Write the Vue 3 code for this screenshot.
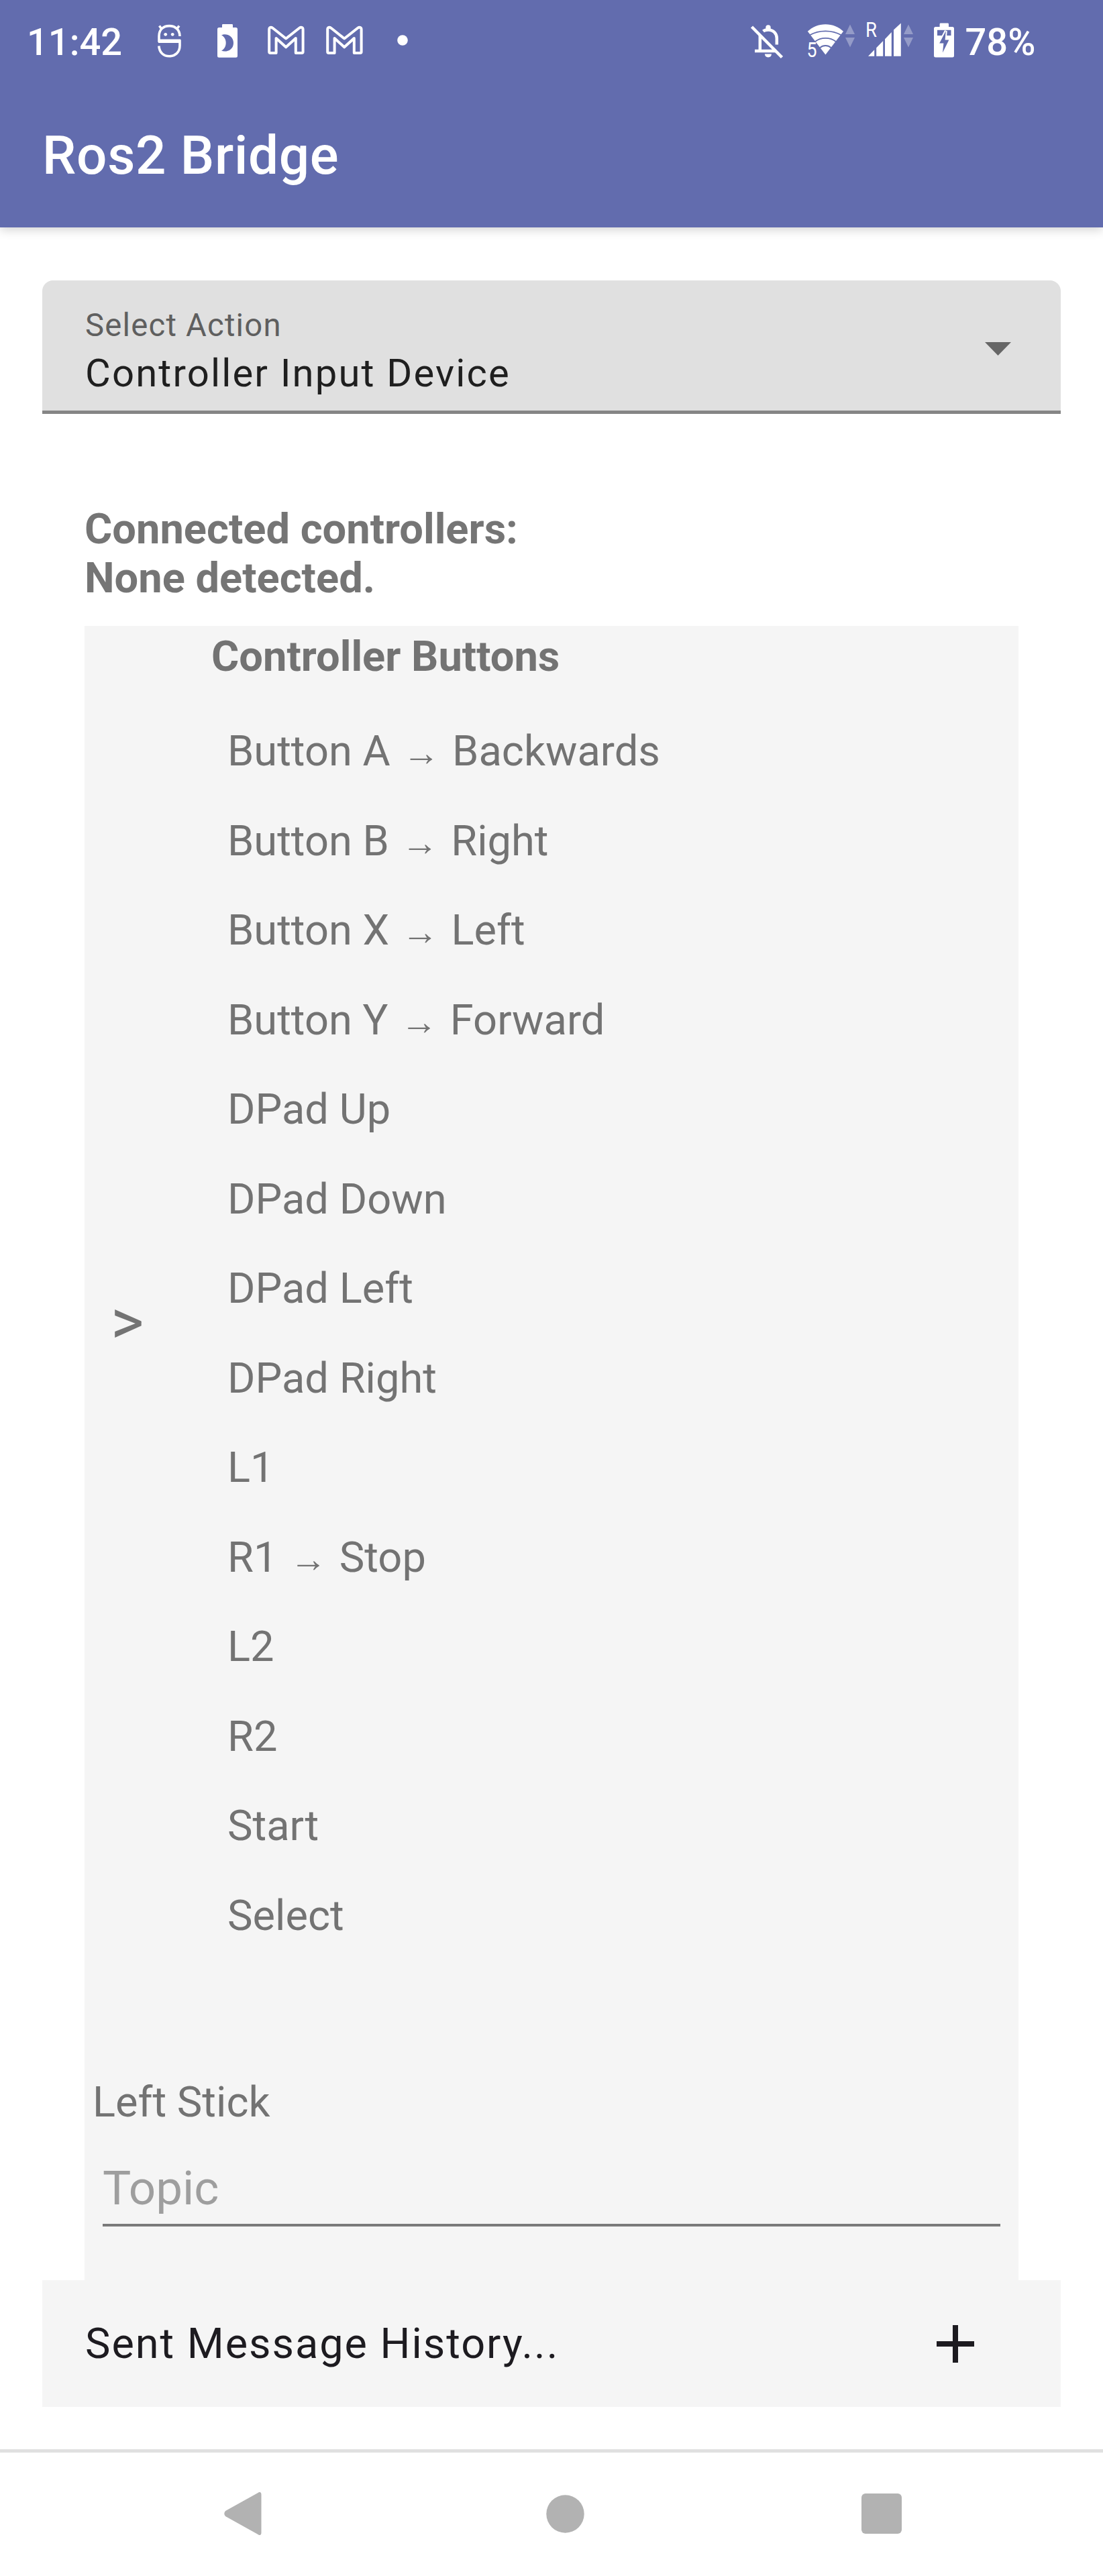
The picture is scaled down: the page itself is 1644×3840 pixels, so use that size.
<script setup>
const buttons = [
  { name: 'Button A', action: 'Backwards' },
  { name: 'Button B', action: 'Right' },
  { name: 'Button X', action: 'Left' },
  { name: 'Button Y', action: 'Forward' },
  { name: 'DPad Up' },
  { name: 'DPad Down' },
  { name: 'DPad Left' },
  { name: 'DPad Right' },
  { name: 'L1' },
  { name: 'R1', action: 'Stop' },
  { name: 'L2' },
  { name: 'R2' },
  { name: 'Start' },
  { name: 'Select' },
]
</script>

<template>
  <div class="screen">
    <header class="app-header">
      <div class="status-bar">
        <span class="clock">11:42</span>

        <svg class="icon ghost" width="35" height="52" viewBox="0 0 35 52" fill="none" stroke="#fff" stroke-width="3.6">
          <path d="M33 19C33 9 26 3.6 17.3 3.6S2 9 2 19V26H33V33C33 43 26 48.8 17.3 48.8S2.5 43 1.8 33.5" />
          <path d="M1 26.2H34" stroke-width="5.4" />
          <path d="M2.5 3.5L6.5 9M32 3.5L28 9" />
          <g fill="#fff" stroke="none"><circle cx="11.7" cy="16.3" r="2.4" /><circle cx="22.2" cy="16.3" r="2.4" /></g>
        </svg>

        <svg class="icon night" width="30" height="52" viewBox="0 0 30 52" fill="#fff" fill-rule="evenodd">
          <path d="M7 2.2Q7 1 8.2 1H21.8Q23 1 23 2.2V6H27.5Q30 6 30 8.5V48.3Q30 50.8 27.5 50.8H2.5Q0 50.8 0 48.3V8.5Q0 6 2.5 6H7ZM6 17.5C15 21.5 15 36.5 6 40.5C12 43.5 24 40.5 24 29S12 14 6 17.5Z" />
        </svg>

        <svg v-for="n in 2" :key="n" class="icon mail" width="55" height="52" viewBox="0 0 55 52" fill="none" stroke="#fff" stroke-width="4" stroke-linejoin="round">
          <path d="M2.2 9C2.2 5.6 5 5 7.4 6.8L27.2 22.5L47.2 6.8C49.6 5 52.6 5.6 52.6 9V42.2Q52.6 44 50.8 44H41.8V22L27.2 35.3L12.6 22V44H4Q2.2 44 2.2 42.2Z" />
        </svg>

        <svg class="icon more" width="16" height="52" viewBox="0 0 16 52" fill="#fff"><circle cx="8" cy="25" r="7.8" /></svg>

        <svg class="icon bell" width="48" height="52" viewBox="0 0 48 52" fill="none" stroke="#fff" stroke-width="4.5">
          <path d="M1.5 5L46.5 50.5" />
          <path d="M13.8 17V40.8M6 41H38M18.5 11.5C20 10.3 23 9.5 26 9.5C34 9.5 38.8 15.5 38.8 22V31.5" />
          <path d="M22.3 9V6Q22.3 2.3 26 2.3T29.7 6V9ZM20.8 45.6H31Q30.5 50.5 26 50.5T20.8 45.6Z" fill="#fff" stroke="none" />
        </svg>

        <svg class="icon wifi" width="71" height="52" viewBox="0 0 71 52" fill="#fff">
          <path d="M27.4 46.4L.8 11.8C8 5 17 1.2 27.4 1.2S46.8 5 54 11.8Z" />
          <g fill="none" stroke="#626cae" stroke-width="1.8">
            <path d="M4 17.3C10.5 13.5 19 11.3 27.4 11.3S44.3 13.5 50.8 17.3" />
            <path d="M12 27C16.5 23.3 22 21.8 27.4 21.8S38.3 23.3 42.8 27" />
            <path d="M19 36.2C21.5 34 24.5 33 27.4 33S33.3 34 35.8 36.2" />
          </g>
          <text class="badge" x="-.5" y="50.4" textLength="15" lengthAdjust="spacingAndGlyphs">5</text>
          <path d="M57 16L64 1.6L71 16ZM57 21H71L64 35.4Z" fill-opacity=".32" />
        </svg>

        <svg class="icon signal" width="70" height="52" viewBox="0 0 70 52" fill="#fff">
          <text class="badge" x="-1" y="20.4" textLength="17" lengthAdjust="spacingAndGlyphs">R</text>
          <path d="M3 48.8L12.2 39.2V48.8ZM15.2 48.8V36.2L25.2 26V48.8ZM28 48.8V23.2L37.8 13V48.8ZM41 48.8V9.6L51.8-.4V48.8Z" />
          <path d="M56 16L63 1.6L70 16ZM56 21H70L63 35.4Z" fill-opacity=".32" />
        </svg>

        <svg class="icon battery" width="30" height="52" viewBox="0 0 30 52" fill="#fff">
          <path d="M8.6 1Q8.6-.4 10-.4H20.6Q22-.4 22 1V5H27.5Q30 5 30 7.5V48Q30 50.5 27.5 50.5H2.5Q0 50.5 0 48V7.5Q0 5 2.5 5H8.6Z" />
          <path d="M5 9.8H25.5V18H5Z" fill="#626cae" />
          <path class="bolt" d="M17.8 11L8.2 29.6H14.4L13 43.5L22.4 24.6H16.6Z" />
        </svg>

        <span class="percent">78%</span>
      </div>
      <h1 class="title">Ros2 Bridge</h1>
    </header>

    <main class="content">
      <div class="select">
        <div class="select-text">
          <span class="select-label">Select Action</span>
          <span class="select-value">Controller Input Device</span>
        </div>
        <svg width="39" height="20" viewBox="0 0 39 20"><path d="M0 0H39L19.5 20Z" fill="#666" /></svg>
      </div>

      <p class="connected">Connected controllers:<br />None detected.</p>

      <section class="panel">
        <div class="group">
          <span class="expander">&gt;</span>
          <div class="group-body">
            <h2 class="group-title">Controller Buttons</h2>
            <ul class="buttons">
              <li v-for="b in buttons" :key="b.name">
                {{ b.name }} <template v-if="b.action"><span class="arrow">→</span> {{ b.action }}</template>
              </li>
            </ul>
          </div>
        </div>
        <p class="stick">Left Stick</p>
        <div class="topic">Topic</div>
      </section>

      <div class="history">
        <span>Sent Message History...</span>
        <svg width="56" height="56" viewBox="0 0 56 56"><path d="M24 0H32V24H56V32H32V56H24V32H0V24H24Z" fill="#1d1b20" /></svg>
      </div>
    </main>

    <nav class="nav-bar">
      <svg class="back" width="56" height="64" viewBox="0 0 56 64"><path d="M50.5 1C53-1 55.5 0 55.5 3.5V60.5C55.5 64 53 65 50.5 63L2 36Q-1.5 32 2 28Z" /></svg>
      <svg class="home" width="57" height="57" viewBox="0 0 57 57"><circle cx="28.5" cy="28.5" r="28.2" /></svg>
      <svg class="recent" width="60" height="60" viewBox="0 0 60 60"><rect width="60" height="60" rx="6" /></svg>
    </nav>
  </div>
</template>

<style>
body {
  background: #fff;
}
</style>

<style scoped>
.screen {
  display: flex;
  flex-direction: column;
  width: 1644px;
  height: 3840px;
  overflow: hidden;
  background: #fff;
  color: #737373;
  font-family: Roboto, "Liberation Sans", sans-serif;
  font-size: 63.2px;
}
h1, h2, p, ul {
  margin: 0;
  padding: 0;
}
svg {
  flex: none;
  display: block;
}
.app-header {
  flex: none;
  height: 339px;
  background: #626cae;
  color: #fff;
  box-shadow: 0 3px 15px rgba(0, 0, 0, 0.19);
}
.status-bar {
  display: flex;
  align-items: flex-start;
  box-sizing: border-box;
  height: 127px;
  padding: 35px 0 0 40px;
  font-size: 56px;
  font-weight: 500;
  line-height: 57px;
}
.icon { overflow: visible; }
.clock { width: 195px; }
.night { margin-left: 54px; }
.mail { margin-left: 45px; }
.mail + .mail { margin-left: 32px; }
.more { margin-left: 51px; }
.bell { margin-left: 511px; }
.wifi { margin-left: 36px; }
.signal { margin-left: 17px; }
.battery { margin-left: 31px; }
.percent { margin-left: 16.5px; }
.badge {
  font-size: 31px;
  font-weight: 400;
}
.bolt {
  fill: #626cae;
  stroke: #fff;
  stroke-width: 4px;
  paint-order: stroke;
}
.title {
  padding-left: 63px;
  font-size: 80px;
  font-weight: 500;
  line-height: 210px;
  letter-spacing: 0.7px;
}
.content {
  flex: none;
  display: flex;
  flex-direction: column;
  height: 3312px;
}
.select {
  display: flex;
  justify-content: space-between;
  box-sizing: border-box;
  height: 199px;
  margin: 79px 63px 0;
  padding: 39px 74px 0 64px;
  border-bottom: 5px solid #858585;
  border-radius: 16px 16px 0 0;
  background: #e0e0e0;
}
.select svg { margin-top: 53px; }
.select-text {
  display: flex;
  flex-direction: column;
}
.select-label {
  color: #5f5f5f;
  font-size: 47.25px;
  line-height: 56px;
  letter-spacing: 1.2px;
}
.select-value {
  margin-top: 7px;
  color: #1f1f1f;
  font-size: 58px;
  line-height: 72px;
  letter-spacing: 2.15px;
}
.connected {
  margin: 134.6px 126px 0;
  color: #757575;
  font-weight: 700;
  line-height: 73.8px;
}
.panel {
  flex: none;
  box-sizing: border-box;
  height: 2466px;
  margin: 33.8px 126px 0;
  padding-top: 9px;
  background: #f5f5f5;
}
.group {
  display: flex;
  align-items: center;
}
.expander {
  box-sizing: border-box;
  width: 189px;
  padding: 78px 0 0 39px;
  font-size: 94.5px;
  font-weight: 400;
  line-height: 84px;
}
.group-title {
  font-size: 63.2px;
  font-weight: 700;
  line-height: 73.5px;
}
.buttons {
  margin-top: 38px;
  padding-left: 24px;
  list-style: none;
  line-height: 133.5px;
}
.buttons li { height: 133.5px; }
.arrow {
  display: inline-block;
  width: 61px;
  font-family: "Liberation Serif", serif;
  font-size: 55px;
  line-height: 1;
  text-align: center;
  vertical-align: 0;
}
.stick {
  margin-top: 173.5px;
  padding-left: 12px;
  line-height: 74px;
}
.topic {
  height: 95px;
  margin: 50.5px 27px 0;
  border-bottom: 4.5px solid #7a7a7a;
  color: #9e9e9e;
  font-size: 70.9px;
  line-height: 84px;
}
.history {
  flex: none;
  display: flex;
  align-items: center;
  justify-content: space-between;
  height: 189px;
  margin: 0 63px;
  padding: 0 129px 0 64px;
  background: #f5f5f5;
  color: #1d1b20;
  font-size: 63px;
  letter-spacing: 1.97px;
}
.history svg { margin-top: 1px; }
.nav-bar {
  flex: none;
  display: flex;
  align-items: center;
  box-sizing: border-box;
  height: 189px;
  padding: 0 0 2px 334px;
  border-top: 5px solid #e0e0e0;
  fill: #b2b2b2;
}
.home { margin-left: 423.5px; }
.recent { margin-left: 413.5px; }
</style>
